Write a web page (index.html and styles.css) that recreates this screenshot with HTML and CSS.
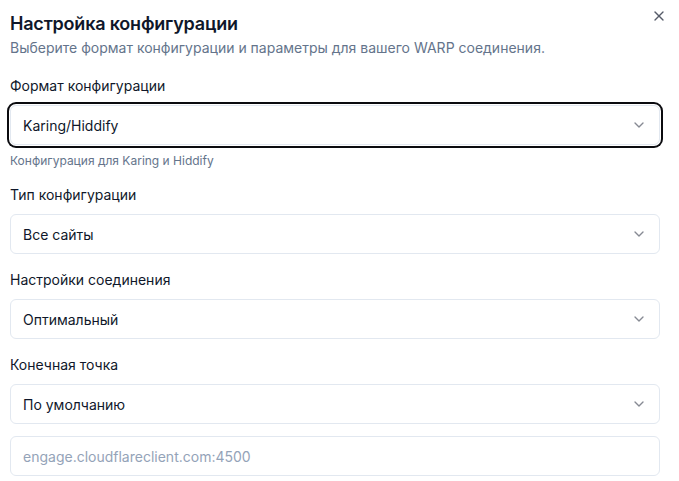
FILE: index.html
```html
<!DOCTYPE html>
<html lang="ru">
<head>
<meta charset="utf-8">
<title>Настройка конфигурации</title>
<link rel="stylesheet" href="styles.css">
</head>
<body>
<div class="dialog">
  <button class="close" aria-label="Закрыть">
    <svg viewBox="0 0 24 24" width="16" height="16" fill="none" stroke="currentColor" stroke-width="2" stroke-linecap="round" stroke-linejoin="round"><path d="M18 6 6 18"/><path d="m6 6 12 12"/></svg>
  </button>
  <header class="header">
    <h2 class="title">Настройка конфигурации</h2>
    <p class="desc">Выберите формат конфигурации и параметры для вашего WARP соединения.</p>
  </header>
  <div class="form">
    <div class="field">
      <label class="label">Формат конфигурации</label>
      <div class="select focused">
        <span class="value">Karing/Hiddify</span>
        <svg class="chev" viewBox="0 0 24 24" width="16" height="16" fill="none" stroke="currentColor" stroke-width="2" stroke-linecap="round" stroke-linejoin="round"><path d="m6 9 6 6 6-6"/></svg>
      </div>
      <p class="hint">Конфигурация для Karing и Hiddify</p>
    </div>
    <div class="field">
      <label class="label">Тип конфигурации</label>
      <div class="select">
        <span class="value">Все сайты</span>
        <svg class="chev" viewBox="0 0 24 24" width="16" height="16" fill="none" stroke="currentColor" stroke-width="2" stroke-linecap="round" stroke-linejoin="round"><path d="m6 9 6 6 6-6"/></svg>
      </div>
    </div>
    <div class="field">
      <label class="label">Настройки соединения</label>
      <div class="select">
        <span class="value">Оптимальный</span>
        <svg class="chev" viewBox="0 0 24 24" width="16" height="16" fill="none" stroke="currentColor" stroke-width="2" stroke-linecap="round" stroke-linejoin="round"><path d="m6 9 6 6 6-6"/></svg>
      </div>
    </div>
    <div class="field">
      <label class="label">Конечная точка</label>
      <div class="select">
        <span class="value">По умолчанию</span>
        <svg class="chev" viewBox="0 0 24 24" width="16" height="16" fill="none" stroke="currentColor" stroke-width="2" stroke-linecap="round" stroke-linejoin="round"><path d="m6 9 6 6 6-6"/></svg>
      </div>
      <input class="input" type="text" placeholder="engage.cloudflareclient.com:4500">
    </div>
  </div>
</div>
</body>
</html>
```
FILE: styles.css
```css
* { box-sizing: border-box; }
html, body { margin: 0; padding: 0; background: #ffffff; }
body {
  font-family: Inter, "Noto Sans", "Liberation Sans", sans-serif;
  color: #0f172a;
}
.dialog {
  position: relative;
  width: 679px;
  padding: 10px 19px 0 10px;
}
.close {
  position: absolute;
  top: 8px;
  left: 651px;
  width: 16px;
  height: 16px;
  padding: 0;
  border: 0;
  background: none;
  color: #0f172a;
  opacity: 0.7;
  display: flex;
}
.header { margin-bottom: 18px; }
.title {
  margin: 0;
  font-size: 18px;
  line-height: 28px;
  font-weight: 600;
  letter-spacing: -0.2px;
}
.desc {
  margin: 0;
  font-size: 14px;
  line-height: 20px;
  color: #64748b;
}
.form { display: flex; flex-direction: column; gap: 16px; }
.field { display: flex; flex-direction: column; }
.label {
  font-size: 14px;
  line-height: 20px;
  font-weight: 400;
  margin-bottom: 9px;
}
.select {
  height: 40px;
  border: 1px solid #e2e8f0;
  border-radius: 6px;
  padding: 0 12px;
  display: flex;
  align-items: center;
  justify-content: space-between;
  font-size: 14px;
  background: #fff;
}
.select.focused {
  box-shadow: 0 0 0 1px #ffffff, 0 0 0 3px #0b0b0f;
}
.chev { color: #0f172a; opacity: 0.5; flex: none; }
.hint {
  margin: 8px 0 0;
  font-size: 12px;
  line-height: 16px;
  color: #64748b;
}
.input {
  margin-top: 12px;
  height: 40px;
  border: 1px solid #e2e8f0;
  border-radius: 6px;
  padding: 0 12px;
  font-family: inherit;
  font-size: 14px;
  color: #0f172a;
  outline: none;
}
.input::placeholder { color: #94a3b8; }
```
